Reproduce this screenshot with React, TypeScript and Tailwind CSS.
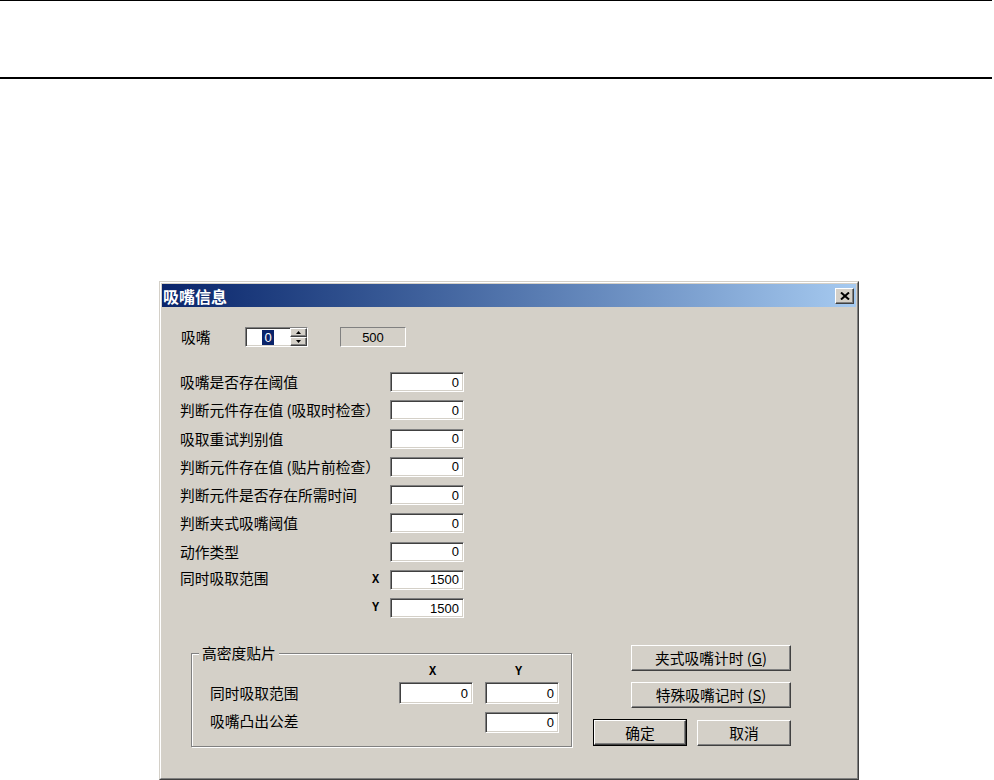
const cjk = "font-['Noto_Sans_CJK_SC',sans-serif] text-[14.75px] leading-[18px] text-black";
const num = "font-['Liberation_Sans',sans-serif] text-[13px] leading-none text-black";

const sunken =
  "border border-t-[#808080] border-l-[#808080] border-r-white border-b-white shadow-[inset_1px_1px_0_#404040,inset_-1px_-1px_0_#d4d0c8]";
const raised =
  "border border-t-white border-l-white border-r-[#404040] border-b-[#404040] shadow-[inset_-1px_-1px_0_#808080] bg-[#d4d0c8]";

const fields = [
  { label: "吸嘴是否存在阈值", value: "0" },
  { label: "判断元件存在值 (吸取时检查）", value: "0" },
  { label: "吸取重试判别值", value: "0" },
  { label: "判断元件存在值 (贴片前检查）", value: "0" },
  { label: "判断元件是否存在所需时间", value: "0" },
  { label: "判断夹式吸嘴阈值", value: "0" },
  { label: "动作类型", value: "0" },
];

function Edit({ value, className = "w-[74px] h-[20px]" }: { value: string; className?: string }) {
  return (
    <div className={`${className} ${sunken} bg-white flex items-center justify-end pr-[4px] ${num}`}>
      {value}
    </div>
  );
}

function Arrow({ up }: { up?: boolean }) {
  return (
    <svg width="5" height="3" viewBox="0 0 5 3">
      <path d={up ? "M2.5 0 L5 3 L0 3 Z" : "M0 0 L5 0 L2.5 3 Z"} fill="#000" />
    </svg>
  );
}

function Button({ children, className }: { children: React.ReactNode; className: string }) {
  return (
    <button className={`${className} ${raised} flex items-center justify-center ${cjk}`}>{children}</button>
  );
}

export default function App() {
  return (
    <div className="min-h-screen bg-white">
      <div className="h-[79px] w-[992px] border-t border-b-2 border-black" />

      <div className="ml-[159px] mt-[202px] h-[499px] w-[700px] bg-[#d4d0c8] border border-t-[#d4d0c8] border-l-[#d4d0c8] border-r-[#404040] border-b-[#404040]">
        <div className="h-full border border-t-white border-l-white border-r-[#808080] border-b-[#808080] p-px flex flex-col">
          {/* title bar */}
          <div className="h-[23px] flex items-center bg-gradient-to-r from-[#0a246a] to-[#a6caf0]">
            <span className="pl-px font-['Noto_Sans_CJK_SC',sans-serif] text-[16px] font-bold text-white leading-none">
              吸嘴信息
            </span>
            <div className={`ml-auto mr-[2px] w-[19px] h-[16px] ${raised} flex items-center justify-center`}>
              <svg width="10" height="8" viewBox="0 0 10 8">
                <path d="M1 0.5 L9 7.5 M9 0.5 L1 7.5" stroke="#000" strokeWidth="2" />
              </svg>
            </div>
          </div>

          {/* body */}
          <div className="flex-1 pl-[18px] pt-[20px]">
            <div className="flex items-center h-[20px]">
              <span className={`w-[65px] pl-px ${cjk}`}>吸嘴</span>
              <div className={`w-[63px] h-[20px] ${sunken} bg-white flex`}>
                <div className="flex-1 flex items-center justify-center">
                  <span className={`bg-[#0a246a] text-white px-[2px] py-px ${num} text-white`}>0</span>
                </div>
                <div className="w-[17px] flex flex-col">
                  <div className={`h-[9px] ${raised} flex items-center justify-center`}>
                    <Arrow up />
                  </div>
                  <div className={`h-[9px] ${raised} flex items-center justify-center`}>
                    <Arrow />
                  </div>
                </div>
              </div>
              <div className="ml-[32px] w-[66px] h-[20px] border border-t-[#808080] border-l-[#808080] border-r-white border-b-white flex items-center justify-center">
                <span className={num}>500</span>
              </div>
            </div>

            <div className="mt-[25px] flex flex-col gap-[8.25px]">
              {fields.map((f) => (
                <div key={f.label} className="flex items-center h-[20px]">
                  <span className={`w-[210px] ${cjk}`}>{f.label}</span>
                  <Edit value={f.value} />
                </div>
              ))}
              <div className="flex items-center h-[20px]">
                <span className={`w-[192px] -mt-[3px] ${cjk}`}>同时吸取范围</span>
                <span className="w-[18px] font-['Liberation_Mono',monospace] text-[12px] font-bold">X</span>
                <Edit value="1500" />
              </div>
              <div className="flex items-center h-[20px]">
                <span className="w-[192px]" />
                <span className="w-[18px] font-['Liberation_Mono',monospace] text-[12px] font-bold">Y</span>
                <Edit value="1500" />
              </div>
            </div>

            <div className="mt-[27px] flex items-start">
              <div className="relative ml-[11px] mt-[8px] w-[381px] h-[94px] border border-[#808080] shadow-[inset_1px_1px_0_#fff,1px_1px_0_#fff] pt-[11px] pl-[18px]">
                <span className={`absolute left-[7px] top-[-10px] bg-[#d4d0c8] px-[3px] ${cjk}`}>高密度贴片</span>
                <div className="flex h-[14px] items-center font-['Liberation_Mono',monospace] text-[12px] font-bold">
                  <span className="w-[189px]" />
                  <span className="w-[74px] text-center pr-[7px]">X</span>
                  <span className="ml-[12px] w-[74px] text-center pr-[7px]">Y</span>
                </div>
                <div className="mt-[3px] flex items-center h-[22px]">
                  <span className={`w-[189px] ${cjk}`}>同时吸取范围</span>
                  <Edit value="0" className="w-[74px] h-[22px]" />
                  <Edit value="0" className="ml-[12px] w-[74px] h-[22px]" />
                </div>
                <div className="mt-[8px] flex items-center h-[21px]">
                  <span className={`w-[275px] -mt-[4px] ${cjk}`}>吸嘴凸出公差</span>
                  <Edit value="0" className="w-[74px] h-[21px]" />
                </div>
              </div>

              <div className="ml-[21px] w-[198px] flex flex-col items-end gap-[11px]">
                <Button className="w-[160px] h-[26px]">
                  夹式吸嘴计时 (<span className="underline">G</span>)
                </Button>
                <Button className="w-[160px] h-[26px]">
                  特殊吸嘴记时 (<span className="underline">S</span>)
                </Button>
                <div className="flex gap-[10px]">
                  <div className="w-[94px] h-[27px] border border-black flex">
                    <Button className="flex-1">确定</Button>
                  </div>
                  <Button className="w-[94px] h-[26px] mt-px">取消</Button>
                </div>
              </div>
            </div>
          </div>
        </div>
      </div>
    </div>
  );
}
